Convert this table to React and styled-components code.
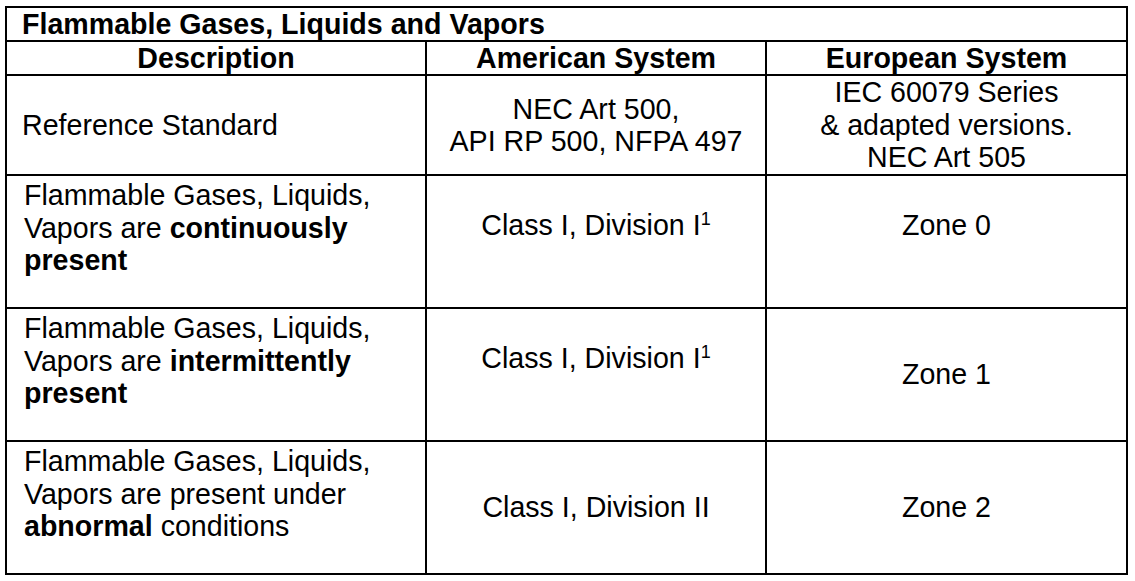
import styled, { createGlobalStyle } from "styled-components"

const GlobalStyle = createGlobalStyle`
  html, body {
    margin: 0;
    padding: 0;
    background: #fff;
  }
  body {
    font-family: "Liberation Sans", Arial, sans-serif;
    color: #000;
  }
`

const Page = styled.div`
  padding: 6px 0 0 5px;
`
const Table = styled.div`
  display: grid;
  grid-template-columns: 418px 338px 359px;
  grid-template-rows: 32px 32px 98px 131px 131px 131px;
  gap: 2px;
  padding: 2px;
  width: fit-content;
  background: #000;
  font-size: 28.6px;
  line-height: 32.5px;
`
const Row = styled.div`
  display: contents;
`
const Title = styled.div`
  grid-column: 1 / -1;
  background: #fff;
  font-weight: bold;
  padding-left: 15px;
  display: flex;
  align-items: center;
`
const Head = styled.div`
  background: #fff;
  font-weight: bold;
  display: flex;
  align-items: center;
  justify-content: center;
`
const Cell = styled.div`
  background: #fff;
  display: flex;
  flex-direction: column;
  justify-content: center;
  text-align: ${p => p.$align === "left" ? "left" : "center"};
  padding: 0 ${p => p.$align === "left" ? "0 0 15px" : "6px"};
  padding-bottom: ${p => p.$trail ? "32px" : "0"};
`
const Text = styled.div``
const Desc = styled.div`
  background: #fff;
  padding: 3px 10px 0 17px;

  b {
    font-weight: bold;
  }
`
const Sup = styled.sup`
  font-size: 18px;
  line-height: 0;
  vertical-align: 10px;
`

const rows = [
  {
    desc: <>Flammable Gases, Liquids, Vapors are <b>continuously present</b></>,
    american: <>Class I, Division I<Sup>1</Sup></>,
    americanTrail: true,
    european: "Zone 0",
    europeanTrail: true,
  },
  {
    desc: <>Flammable Gases, Liquids, Vapors are <b>intermittently present</b></>,
    american: <>Class I, Division I<Sup>1</Sup></>,
    americanTrail: true,
    european: "Zone 1",
  },
  {
    desc: <>Flammable Gases, Liquids, Vapors are present under <b>abnormal</b> conditions</>,
    american: "Class I, Division II",
    european: "Zone 2",
  },
]

export default function App(){
  return (
    <Page>
      <GlobalStyle />
      <Table>
        <Title>Flammable Gases, Liquids and Vapors</Title>
        <Head>Description</Head>
        <Head>American System</Head>
        <Head>European System</Head>

        <Cell $align="left"><Text>Reference Standard</Text></Cell>
        <Cell><Text>NEC Art 500,<br />API RP 500, NFPA 497</Text></Cell>
        <Cell><Text>IEC 60079 Series<br />&amp; adapted versions.<br />NEC Art 505</Text></Cell>

        {rows.map((row, i) => (
          <Row key={i}>
            <Desc>{row.desc}</Desc>
            <Cell $trail={row.americanTrail}><Text>{row.american}</Text></Cell>
            <Cell $trail={row.europeanTrail}><Text>{row.european}</Text></Cell>
          </Row>
        ))}
      </Table>
    </Page>
  )
}
